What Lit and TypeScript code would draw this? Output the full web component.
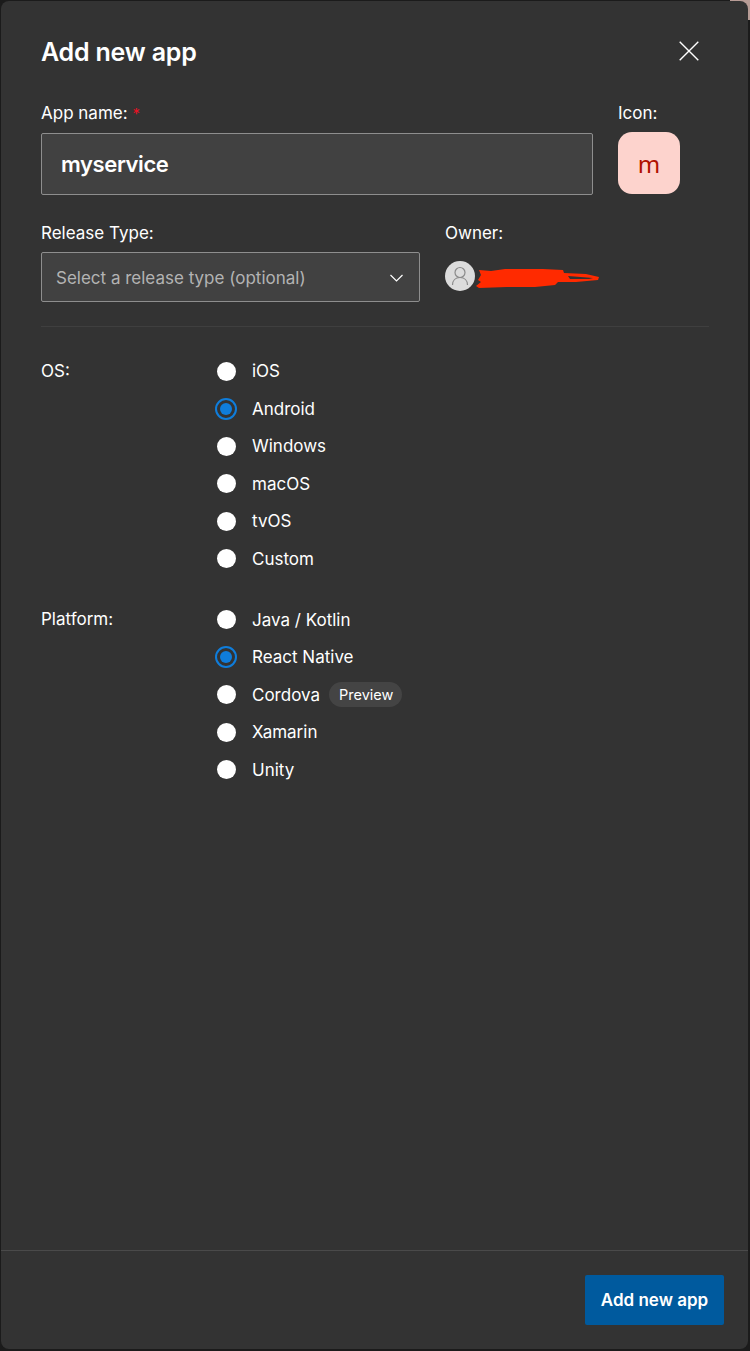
import { LitElement, html, css, svg } from "lit";
import { customElement } from "lit/decorators.js";

const OS = [["iOS"], ["Android", true], ["Windows"], ["macOS"], ["tvOS"], ["Custom"]] as [string, boolean?][];
const PLATFORM = [["Java / Kotlin"], ["React Native", true], ["Cordova", false, "Preview"], ["Xamarin"], ["Unity"]] as [string, boolean?, string?][];

@customElement("app-root")
export class AppRoot extends LitElement {
  static styles = css`
    :host {
      display: block;
      width: 750px;
      height: 1351px;
      background: #1b1b1b;
      font-family: Inter, "Liberation Sans", sans-serif;
      color: #fff;
      position: relative;
      overflow: hidden;
    }
    .corner {
      position: absolute;
      top: 0;
      right: 0;
      width: 20px;
      height: 20px;
      background: #b89c96;
    }
    .modal {
      position: absolute;
      left: 1px;
      top: 1px;
      width: 747px;
      height: 1348px;
      background: #333333;
      border-radius: 8px;
      box-sizing: border-box;
      display: flex;
      flex-direction: column;
    }
    .body {
      flex: 1;
      padding: 0 40px;
      display: flex;
      flex-direction: column;
    }
    .head {
      display: flex;
      justify-content: space-between;
      align-items: center;
      height: 102px;
    }
    h1 {
      margin: 0;
      font-size: 25px;
      line-height: 30px;
      font-weight: 600;
      letter-spacing: -0.2px;
    }
    .close {
      margin: 0 9px 2px 0;
      display: block;
      width: 20px;
      height: 20px;
    }
    .row1 {
      display: flex;
      gap: 25px;
    }
    .grow {
      width: 552px;
    }
    label, .lbl {
      display: block;
      height: 20px;
      font-size: 17px;
      line-height: 20px;
      font-weight: 400;
      color: #fff;
    }
    .req {
      color: #e81123;
      font-size: 15px;
      line-height: 1;
    }
    .name {
      margin-top: 10px;
      height: 62px;
      box-sizing: border-box;
      background: #414141;
      border: 1px solid #8e8e8e;
      border-radius: 2px;
      padding: 0 19px;
      display: flex;
      align-items: center;
      font-size: 22px;
      font-weight: 600;
      letter-spacing: -0.4px;
    }
    .tile {
      margin-top: 9px;
      width: 62px;
      height: 62px;
      border-radius: 14px;
      background: #fdd3cd;
      color: #b01000;
      display: flex;
      align-items: center;
      justify-content: center;
      font-size: 24px;
      font-family: "Noto Sans", sans-serif;
    }
    .row2 {
      display: flex;
      gap: 25px;
      margin-top: 28px;
    }
    .rel {
      width: 379px;
    }
    .select {
      margin-top: 9px;
      height: 50px;
      box-sizing: border-box;
      background: #414141;
      border: 1px solid #8e8e8e;
      border-radius: 2px;
      padding: 1px 16px 0 14px;
      display: flex;
      align-items: center;
      justify-content: space-between;
      font-size: 17px;
      color: #b3b3b3;
    }
    .owner {
      margin-top: 18px;
      display: flex;
      align-items: center;
      height: 30px;
      position: relative;
    }
    .avatar {
      display: block;
      width: 30px;
      height: 30px;
      flex: none;
    }
    .scribble {
      position: absolute;
      left: 30px;
      top: 4px;
      width: 126px;
      height: 26px;
    }
    hr {
      margin: 24px 0 0;
      width: 668px;
      border: 0;
      height: 1px;
      background: #3f3f3f;
    }
    .group {
      display: flex;
    }
    .group .lbl {
      width: 174px;
      line-height: 37.5px;
      height: 37.5px;
    }
    .os {
      margin-top: 25.5px;
    }
    .platform {
      margin-top: 23.5px;
    }
    .opt {
      height: 37.5px;
      display: flex;
      align-items: center;
      font-size: 17px;
    }
    .radio {
      width: 22px;
      height: 22px;
      border-radius: 50%;
      margin-right: 15px;
      box-sizing: border-box;
      flex: none;
      display: flex;
      align-items: center;
      justify-content: center;
    }
    .radio::after {
      content: "";
      width: 19px;
      height: 19px;
      border-radius: 50%;
      background: #fff;
    }
    .radio.on {
      border: 2px solid #0f7ddb;
    }
    .radio.on::after {
      width: 12px;
      height: 12px;
      background: #0f7ddb;
    }
    .badge {
      margin-left: 9px;
      height: 25px;
      padding: 0 9px 0 10px;
      border-radius: 13px;
      background: #444444;
      font-size: 14.5px;
      display: flex;
      align-items: center;
    }
    .foot {
      border-top: 1px solid #4a4a4a;
      height: 99px;
      box-sizing: border-box;
      display: flex;
      justify-content: flex-end;
      align-items: flex-start;
      padding: 24px 24px 0 0;
    }
    button {
      width: 139px;
      height: 50px;
      border: 0;
      border-radius: 2px;
      background: #005a9e;
      color: #fff;
      font-family: inherit;
      font-size: 17px;
      font-weight: 600;
    }
  `;

  private option(name: string, on?: boolean, badge?: string) {
    return html`<div class="opt">
      <span class="radio ${on ? "on" : ""}"></span><span>${name}</span>
      ${badge ? html`<span class="badge">${badge}</span>` : ""}
    </div>`;
  }

  render() {
    return html`
      <div class="corner"></div>
      <div class="modal">
        <div class="body">
          <div class="head">
            <h1>Add new app</h1>
            <svg class="close" viewBox="0 0 20 20" fill="none" stroke="#fff" stroke-width="1.4">
              <path d="M.7.7l18.6 18.6M19.3.7L.7 19.3" />
            </svg>
          </div>
          <div class="row1">
            <div class="grow">
              <label>App name: <span class="req">*</span></label>
              <div class="name">myservice</div>
            </div>
            <div>
              <label>Icon:</label>
              <div class="tile">m</div>
            </div>
          </div>
          <div class="row2">
            <div class="rel">
              <label>Release Type:</label>
              <div class="select">
                <span>Select a release type (optional)</span>
                <svg width="13" height="8" viewBox="0 0 13 8" fill="none" stroke="#fff" stroke-width="1.2">
                  <path d="M.5 1l6 6 6-6" />
                </svg>
              </div>
            </div>
            <div>
              <label>Owner:</label>
              <div class="owner">
                <svg class="avatar" viewBox="0 0 30 30">
                  <circle cx="15" cy="15" r="15" fill="#dcdcdc" />
                  ${svg`<circle cx="15" cy="11.5" r="5" fill="none" stroke="#8a8a8a" stroke-width="1.2" />
                  <path d="M7.5 24c0-4.5 3-7.5 7.5-7.5s7.500 3 7.500 7.500" fill="none" stroke="#8a8a8a" stroke-width="1.200" />`}
                </svg>
                <svg class="scribble" viewBox="0 0 126 26">
                  <path
                    d="M4 5l12 1 14-2 38 0 20 1 1 3 22 1 13 3-1 3-22 2-18 0-3 3-20 2-28 0-28 1-3-2 5-4-3-2 3-5z"
                    fill="#ff2a00"
                  />
                  <path d="M93 11l25 2-4 1-19 0z" fill="#333" />
                </svg>
              </div>
            </div>
          </div>
          <hr />
          <div class="group os">
            <div class="lbl">OS:</div>
            <div>${OS.map(([n, on]) => this.option(n, on))}</div>
          </div>
          <div class="group platform">
            <div class="lbl">Platform:</div>
            <div>${PLATFORM.map(([n, on, b]) => this.option(n, on, b))}</div>
          </div>
        </div>
        <div class="foot"><button>Add new app</button></div>
      </div>
    `;
  }
}
